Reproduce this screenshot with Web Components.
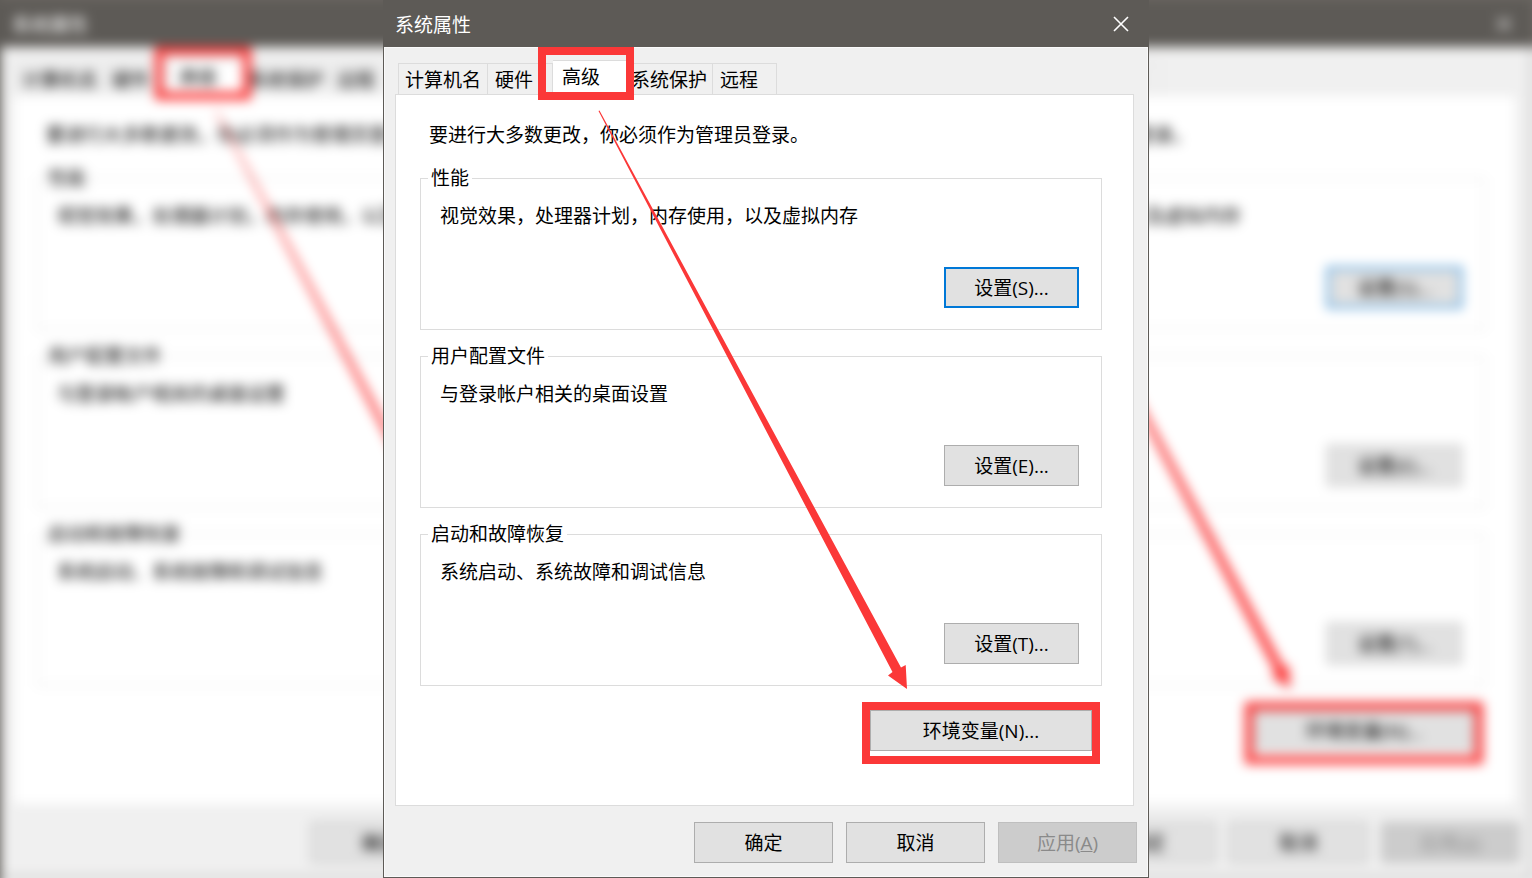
<!DOCTYPE html>
<html lang="zh-CN">
<head>
<meta charset="utf-8">
<meta name="viewport" content="width=device-width, initial-scale=1">
<title>系统属性</title>
<style>
  html, body { margin: 0; min-height: 100%; }
  body {
    font: 19px/24px "Open Sans", "Noto Sans CJK SC", sans-serif;
    color: #000;
    background: #f0f0f0;
  }
</style>
</head>
<body>
<properties-scene></properties-scene>

<template id="scene-template">
  <style>
    :host { display: grid; justify-items: center; position: relative; min-height: 100vh; overflow: hidden; }
    .backdrop {
      position: absolute; inset: 0;
      display: grid; grid-template-columns: 1fr 1fr;
      filter: blur(6px);
      pointer-events: none;
    }
    .backdrop::before {
      content: ""; position: absolute; inset: -20px; z-index: -1;
      border-left: 20px solid #5d5a56;
      background: linear-gradient(#6b6762 0 67px, #f0f0f0 67px);
    }
    .front { position: relative; width: 50%; box-sizing: border-box; }
  </style>
  <div class="backdrop" inert aria-hidden="true">
    <properties-dialog></properties-dialog>
    <properties-dialog></properties-dialog>
  </div>
  <properties-dialog class="front" role="dialog" aria-label="系统属性"></properties-dialog>
</template>

<template id="dialog-template">
  <style>
    :host {
      display: flex; flex-direction: column; position: relative; box-sizing: border-box;
      border: 1px solid #5d5a56; background: #f0f0f0;
    }
    header {
      display: flex; align-items: center; justify-content: space-between;
      height: 46px; padding: 0 19px 0 11px;
      background: #5d5a56; color: #fff;
    }
    h1 { margin: 0; padding-top: 2px; font: inherit; }
    .close { display: grid; place-items: center; width: 16px; height: 16px; padding: 0; border: 0; background: none; color: inherit; }
    .close svg { display: block; }
    .body {
      flex: 1; display: flex; flex-direction: column;
      padding: 13px 14px 14px 11px;
      box-shadow: inset 0 0 0 1px #fafafa;
    }
    nav { display: flex; align-items: flex-end; padding-left: 3px; }
    .panel {
      display: flex; flex-direction: column; flex: 1;
      padding: 28px 31px 41px 24px;
      border: 1px solid #dcdcdc; background: #fff;
    }
    .panel p { margin: 0 0 19px 9px; }
    .groups { display: grid; gap: 14px; }
    .env { align-self: flex-end; margin-top: 16px; }
    footer { display: flex; justify-content: flex-end; gap: 13px; margin: 16px -3px 0 0; }
    footer win-button { width: 139px; }
    .arrow { position: absolute; left: -1px; top: -1px; width: 766px; height: 878px; pointer-events: none; }
  </style>
  <header>
    <h1>系统属性</h1>
    <button class="close" type="button" aria-label="关闭">
      <svg width="16" height="16" viewBox="0 0 16 16" fill="none" stroke="currentColor" stroke-width="1.6"><path d="M1 1l14 14M15 1L1 15"/></svg>
    </button>
  </header>
  <div class="body">
    <nav role="tablist">
      <win-tab>计算机名</win-tab>
      <win-tab>硬件</win-tab>
      <win-tab selected>高级</win-tab>
      <win-tab>系统保护</win-tab>
      <win-tab>远程</win-tab>
    </nav>
    <section class="panel">
      <p>要进行大多数更改，你必须作为管理员登录。</p>
      <div class="groups">
        <settings-group>
          <span slot="title">性能</span>视觉效果，处理器计划，内存使用，以及虚拟内存
          <win-button slot="action" primary>设置(S)...</win-button>
        </settings-group>
        <settings-group>
          <span slot="title">用户配置文件</span>与登录帐户相关的桌面设置
          <win-button slot="action">设置(E)...</win-button>
        </settings-group>
        <settings-group>
          <span slot="title">启动和故障恢复</span>系统启动、系统故障和调试信息
          <win-button slot="action">设置(T)...</win-button>
        </settings-group>
      </div>
      <red-frame class="env"><win-button>环境变量(N)...</win-button></red-frame>
    </section>
    <footer>
      <win-button>确定</win-button>
      <win-button>取消</win-button>
      <win-button disabled>应用(<u>A</u>)</win-button>
    </footer>
  </div>
  <svg class="arrow" viewBox="0 0 766 878" aria-hidden="true">
    <path fill="#fb3838" d="M215.5 111L216.5 110.5L518 667.5L522.7 665L524 689L505 675.5L509.5 672Z"/>
  </svg>
</template>

<template id="tab-template">
  <style>
    :host { display: block; position: relative; }
    button {
      display: block; box-sizing: border-box; height: 31px; padding: 2px 5px 0 7px;
      border: 1px solid #dcdcdc; border-width: 1px 1px 0 0;
      background: #f0f0f0; color: inherit; font: inherit; white-space: nowrap;
    }
    :host(:first-child) button { border-left-width: 1px; padding: 2px 6px 0; }
    :host(:nth-child(2)) button { padding-right: 19px; }
    :host(:nth-child(4)) button { padding-left: 4px; }
    :host(:last-child) button { padding-right: 18px; }
    :host([selected]) { z-index: 1; }
    :host([selected]) button { height: 34px; padding: 0 26px 2px 9px; background: #fff; }
    .frame { display: none; }
    :host([selected]) .frame {
      display: block; position: absolute; left: -15px; top: -13px;
      box-sizing: border-box; width: 96px; height: 53px;
      border: 8px solid #fb3838; pointer-events: none;
    }
  </style>
  <button type="button" role="tab"><slot></slot></button>
  <div class="frame"></div>
</template>

<template id="group-template">
  <style>
    :host { display: block; }
    fieldset {
      box-sizing: border-box; height: 164px; min-width: 0; margin: 0;
      padding: 0 22px 21px 7px; border: 1px solid #dcdcdc;
    }
    legend { height: 24px; padding: 0 3px; }
    .content { display: flex; flex-direction: column; justify-content: space-between; height: 104px; padding: 14px 0 0 12px; box-sizing: content-box; }
    .content { height: 104px; }
    .action { align-self: flex-end; width: 135px; }
  </style>
  <fieldset>
    <legend><slot name="title"></slot></legend>
    <div class="content">
      <div><slot></slot></div>
      <div class="action"><slot name="action"></slot></div>
    </div>
  </fieldset>
</template>

<template id="button-template">
  <style>
    :host { display: block; }
    button {
      display: block; box-sizing: border-box; width: 100%; height: 41px; padding: 0;
      border: 1px solid #adadad; background: #e1e1e1; color: #000; font: inherit;
    }
    :host([primary]) button { border: 2px solid #0078d7; }
    button:disabled { border-color: #bfbfbf; background: #ccc; color: #8a8a8a; }
  </style>
  <button type="button"><slot></slot></button>
</template>

<template id="frame-template">
  <style>
    :host { display: block; box-sizing: border-box; width: 238px; margin-right: 2px; padding-bottom: 5px; border: 8px solid #fb3838; }
  </style>
  <slot></slot>
</template>

<script>
  class TemplateElement extends HTMLElement {
    constructor() {
      super();
      const template = document.getElementById(this.constructor.template);
      this.attachShadow({ mode: 'open' }).append(document.importNode(template.content, true));
    }
  }

  class WinButton extends TemplateElement {
    static template = 'button-template';
    connectedCallback() {
      this.shadowRoot.querySelector('button').disabled = this.hasAttribute('disabled');
    }
  }

  class WinTab extends TemplateElement {
    static template = 'tab-template';
    connectedCallback() {
      this.shadowRoot.querySelector('button').setAttribute('aria-selected', this.hasAttribute('selected'));
    }
  }

  class RedFrame extends TemplateElement { static template = 'frame-template'; }
  class SettingsGroup extends TemplateElement { static template = 'group-template'; }
  class PropertiesDialog extends TemplateElement { static template = 'dialog-template'; }
  class PropertiesScene extends TemplateElement { static template = 'scene-template'; }

  customElements.define('win-button', WinButton);
  customElements.define('win-tab', WinTab);
  customElements.define('red-frame', RedFrame);
  customElements.define('settings-group', SettingsGroup);
  customElements.define('properties-dialog', PropertiesDialog);
  customElements.define('properties-scene', PropertiesScene);
</script>
</body>
</html>
